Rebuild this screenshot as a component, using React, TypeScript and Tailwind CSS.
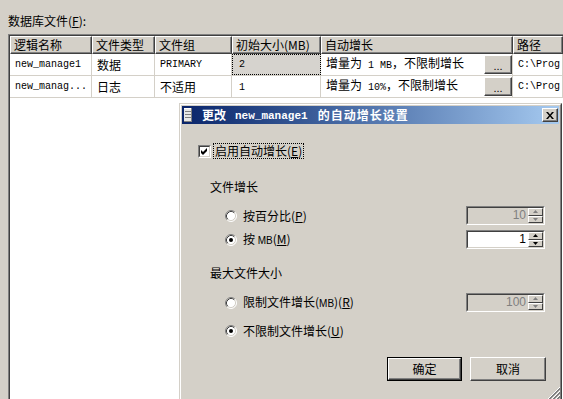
import React from "react";

const Mono = ({ children, bold }: { children: React.ReactNode; bold?: boolean }) =>
  bold ? (
    <span className="font-['Liberation_Mono',monospace] text-[11px] font-bold">{children}</span>
  ) : (
    <span className="font-['Liberation_Mono',monospace] text-[10px]">{children}</span>
  );

function Radio({ checked }: { checked?: boolean }) {
  return (
    <svg width="12" height="12" viewBox="0 0 12 12" className="shrink-0">
      <circle cx="6" cy="6" r="5" fill="white" />
      <path d="M2.11 9.89 A5.5 5.5 0 0 1 9.89 2.11" stroke="#808080" strokeWidth="1" fill="none" />
      <path d="M9.89 2.11 A5.5 5.5 0 0 1 2.11 9.89" stroke="#ffffff" strokeWidth="1" fill="none" />
      <path d="M2.82 9.18 A4.5 4.5 0 0 1 9.18 2.82" stroke="#404040" strokeWidth="1" fill="none" />
      <path d="M9.18 2.82 A4.5 4.5 0 0 1 2.82 9.18" stroke="#d4d0c8" strokeWidth="1" fill="none" />
      {checked && <circle cx="6" cy="6" r="2" fill="black" />}
    </svg>
  );
}

function Checkbox() {
  return (
    <div className="w-[13px] h-[13px] shrink-0 border border-t-[#808080] border-l-[#808080] border-r-white border-b-white">
      <div className="w-full h-full border border-t-[#404040] border-l-[#404040] border-r-[#d4d0c8] border-b-[#d4d0c8] bg-white">
        <svg width="9" height="9" viewBox="0 0 9 9">
          <path d="M1 3 L3 5 L7 1 L7 4 L3 8 L1 6 Z" fill="black" />
        </svg>
      </div>
    </div>
  );
}

function SpinBtn({ up, disabled }: { up?: boolean; disabled?: boolean }) {
  return (
    <div className="h-[8px] w-[15px] bg-[#d4d0c8] border border-t-white border-l-white border-r-[#404040] border-b-[#404040] flex items-center justify-center">
      <svg width="5" height="3" viewBox="0 0 5 3">
        {up ? (
          <path d="M0 3 L2.5 0 L5 3 Z" fill={disabled ? "#808080" : "black"} />
        ) : (
          <path d="M0 0 L5 0 L2.5 3 Z" fill={disabled ? "#808080" : "black"} />
        )}
      </svg>
    </div>
  );
}

function Spin({ value, disabled }: { value: string; disabled?: boolean }) {
  return (
    <div className="w-[79px] h-[19px] border border-t-[#808080] border-l-[#808080] border-r-white border-b-white">
      <div
        className={
          disabled
            ? "h-full flex border border-t-[#404040] border-l-[#404040] border-r-[#d4d0c8] border-b-[#d4d0c8] bg-[#d4d0c8] text-[#808080]"
            : "h-full flex border border-t-[#404040] border-l-[#404040] border-r-[#d4d0c8] border-b-[#d4d0c8] bg-white text-black"
        }
      >
        <div className="flex-1 text-right pr-[2px] font-['Liberation_Sans',sans-serif] text-[12px] leading-[15px]">
          {value}
        </div>
        <div className="flex flex-col">
          <SpinBtn up disabled={disabled} />
          <SpinBtn disabled={disabled} />
        </div>
      </div>
    </div>
  );
}

function Head({ w, children }: { w?: string; children: React.ReactNode }) {
  return (
    <div
      className={
        (w ?? "flex-1") +
        " h-[18px] shrink-0 flex items-center pl-[3px] bg-[#d4d0c8] border border-t-white border-l-white border-r-[#404040] border-b-[#404040] shadow-[inset_-1px_-1px_0_#808080] whitespace-nowrap overflow-hidden"
      }
    >
      {children}
    </div>
  );
}

function Cell({ w, children, sel }: { w?: string; children?: React.ReactNode; sel?: boolean }) {
  return (
    <div
      className={
        (w ?? "flex-1") +
        (sel
          ? " h-full shrink-0 flex items-center pl-[7px] border-r border-[#d4d0c8] bg-[#d6d3ce] outline-1 outline-dotted outline-black -outline-offset-1 whitespace-nowrap overflow-hidden"
          : " h-full shrink-0 flex items-center pl-[5px] border-r border-[#d4d0c8] whitespace-nowrap overflow-hidden")
      }
    >
      {children}
    </div>
  );
}

function Dots() {
  return (
    <div className="ml-auto w-[28px] h-[19px] shrink-0 bg-[#d4d0c8] border border-t-white border-l-white border-r-[#404040] border-b-[#404040] shadow-[inset_-1px_-1px_0_#808080] flex items-end justify-center pb-[2px] font-['Liberation_Sans',sans-serif] text-[11px] leading-[10px]">
      ...
    </div>
  );
}

function Row({ cells }: { cells: React.ReactNode[] }) {
  return <div className="h-[22px] flex border-b border-[#d4d0c8]">{cells}</div>;
}

export default function App() {
  return (
    <div className="relative w-[563px] h-[399px] overflow-hidden bg-[#d4d0c8] font-['Noto_Sans_CJK_SC',sans-serif] text-[12px] leading-[16px] text-black">
      <div className="h-[34px] pl-[8px] pt-[13px]">
        数据库文件(<u>F</u>):
      </div>
      <div className="ml-[8px] h-[365px] border-t border-l border-[#808080]">
        <div className="h-full border-t border-l border-[#404040] bg-white">
          <div className="flex">
            <Head w="w-[82px]">逻辑名称</Head>
            <Head w="w-[63px]">文件类型</Head>
            <Head w="w-[77px]">文件组</Head>
            <Head w="w-[89px]">初始大小(MB)</Head>
            <Head w="w-[192px]">自动增长</Head>
            <Head>路径</Head>
          </div>
          <Row
            cells={[
              <Cell key="a" w="w-[82px]"><Mono>new_manage1</Mono></Cell>,
              <Cell key="b" w="w-[63px]">数据</Cell>,
              <Cell key="c" w="w-[77px]"><Mono>PRIMARY</Mono></Cell>,
              <Cell key="d" w="w-[89px]" sel><Mono>2</Mono></Cell>,
              <Cell key="e" w="w-[192px]">
                <span>增量为<Mono> 1 MB</Mono>，不限制增长</span>
                <Dots />
              </Cell>,
              <Cell key="f"><Mono>C:\Prog</Mono></Cell>,
            ]}
          />
          <Row
            cells={[
              <Cell key="a" w="w-[82px]"><Mono>new_manag...</Mono></Cell>,
              <Cell key="b" w="w-[63px]">日志</Cell>,
              <Cell key="c" w="w-[77px]">不适用</Cell>,
              <Cell key="d" w="w-[89px]"><span className="pl-[2px]"><Mono>1</Mono></span></Cell>,
              <Cell key="e" w="w-[192px]">
                <span>增量为<Mono> 10%</Mono>，不限制增长</span>
                <Dots />
              </Cell>,
              <Cell key="f"><Mono>C:\Prog</Mono></Cell>,
            ]}
          />
        </div>
      </div>

      {/* Dialog window */}
      <div className="absolute left-[179px] top-[103px] w-[383px] h-[300px] border border-t-[#d4d0c8] border-l-[#d4d0c8] border-r-[#404040] border-b-[#404040]">
        <div className="relative h-full flex flex-col p-[1px] bg-[#d4d0c8] border border-t-white border-l-white border-r-[#808080] border-b-[#808080]">
          <div className="h-[18px] shrink-0 flex items-center bg-linear-to-r from-[#0a246a] to-[#a6caf0] text-white font-bold">
            <svg width="8" height="14" viewBox="0 0 8 14" className="ml-[2px] shrink-0">
              <rect x="0" y="0" width="8" height="14" fill="#e8e8e8" />
              <rect x="0" y="0" width="8" height="1" fill="#ffffff" />
              <rect x="7" y="0" width="1" height="14" fill="#808080" />
              <rect x="0" y="13" width="8" height="1" fill="#808080" />
              <rect x="1" y="3" width="6" height="1" fill="#808080" />
              <rect x="1" y="6" width="6" height="1" fill="#808080" />
              <rect x="1" y="9" width="6" height="1" fill="#808080" />
            </svg>
            <span className="ml-[10px] whitespace-nowrap flex items-center">
              <span>更改</span>
              <span className="ml-[9px]"><Mono bold>new_manage1</Mono></span>
              <span className="ml-[10px] tracking-[1px]">的自动增长设置</span>
            </span>
            <div className="ml-auto mr-[1px] w-[16px] h-[14px] shrink-0 bg-[#d4d0c8] border border-t-white border-l-white border-r-[#404040] border-b-[#404040] shadow-[inset_-1px_-1px_0_#808080] flex items-center justify-center">
              <svg width="8" height="7" viewBox="0 0 8 7">
                <path d="M0 0 L2 0 L4 2.5 L6 0 L8 0 L5 3.5 L8 7 L6 7 L4 4.5 L2 7 L0 7 L3 3.5 Z" fill="black" />
              </svg>
            </div>
          </div>

          <div className="flex flex-col pl-[16px] pr-[14px]">
            <div className="mt-[19px] h-[16px] flex items-center">
              <Checkbox />
              <span className="ml-[3px] px-[1px] outline-1 outline-dotted outline-black leading-[14px]">
                启用自动增长(<u>E</u>)
              </span>
            </div>
            <div className="mt-[20px] pl-[12px] h-[16px]">文件增长</div>
            <div className="mt-[11px] h-[19px] flex items-center justify-between pl-[27px]">
              <div className="flex items-center">
                <Radio />
                <span className="ml-[6px]">按百分比(<u>P</u>)</span>
              </div>
              <Spin value="10" disabled />
            </div>
            <div className="mt-[5px] h-[19px] flex items-center justify-between pl-[27px]">
              <div className="flex items-center">
                <Radio checked />
                <span className="ml-[6px]">
                  按 <span className="font-['Liberation_Sans',sans-serif] text-[10px]">MB</span>(<u>M</u>)
                </span>
              </div>
              <Spin value="1" />
            </div>
            <div className="mt-[16px] pl-[12px] h-[16px]">最大文件大小</div>
            <div className="mt-[12px] h-[19px] flex items-center justify-between pl-[27px]">
              <div className="flex items-center">
                <Radio />
                <span className="ml-[6px]">
                  限制文件增长(<span className="font-['Liberation_Sans',sans-serif] text-[10px]">MB</span>)(<u>R</u>)
                </span>
              </div>
              <Spin value="100" disabled />
            </div>
            <div className="mt-[11px] h-[16px] flex items-center pl-[27px]">
              <Radio checked />
              <span className="ml-[6px]">不限制文件增长(<u>U</u>)</span>
            </div>
            <div className="mt-[18px] flex justify-end gap-[8px] mr-[-1px]">
              <div className="w-[75px] h-[24px] border border-black">
                <div className="h-full bg-[#d4d0c8] border border-t-white border-l-white border-r-[#404040] border-b-[#404040] shadow-[inset_-1px_-1px_0_#808080] flex items-center justify-center">
                  确定
                </div>
              </div>
              <div className="w-[76px] h-[24px] bg-[#d4d0c8] border border-t-white border-l-white border-r-[#404040] border-b-[#404040] shadow-[inset_-1px_-1px_0_#808080] flex items-center justify-center">
                取消
              </div>
            </div>
          </div>

          <svg width="12" height="12" viewBox="0 0 12 12" className="absolute right-0 bottom-[2px]">
            <line x1="12" y1="0" x2="0" y2="12" stroke="#ffffff" />
            <line x1="12" y1="1" x2="1" y2="12" stroke="#808080" />
            <line x1="12" y1="2" x2="2" y2="12" stroke="#808080" />
            <line x1="12" y1="4" x2="4" y2="12" stroke="#ffffff" />
            <line x1="12" y1="5" x2="5" y2="12" stroke="#808080" />
            <line x1="12" y1="6" x2="6" y2="12" stroke="#808080" />
            <line x1="12" y1="8" x2="8" y2="12" stroke="#ffffff" />
            <line x1="12" y1="9" x2="9" y2="12" stroke="#808080" />
            <line x1="12" y1="10" x2="10" y2="12" stroke="#808080" />
          </svg>
        </div>
      </div>
    </div>
  );
}
